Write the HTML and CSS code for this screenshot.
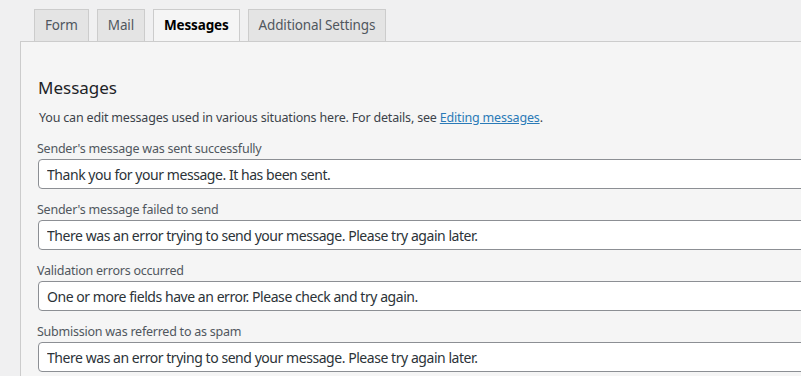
FILE: index.html
```html
<!DOCTYPE html>
<html lang="en">
<head>
    <meta charset="UTF-8">
    <meta name="viewport" content="width=device-width, initial-scale=1.0">
    <title>Contact Form Messages</title>
    <link rel="stylesheet" href="styles.css">
</head>
<body>
    <div class="editor">
        <!-- Tabs -->
        <ul class="tabs">
            <li class="tab"><a href="#">Form</a></li>
            <li class="tab"><a href="#">Mail</a></li>
            <li class="tab active"><a href="#">Messages</a></li>
            <li class="tab"><a href="#">Additional Settings</a></li>
        </ul>

        <!-- Messages panel -->
        <div class="panel">
            <h2>Messages</h2>
            <p class="intro">You can edit messages used in various situations here. For details, see <a href="#">Editing messages</a>.</p>

            <div class="field">
                <label for="msg1">Sender's message was sent successfully</label>
                <input type="text" id="msg1" value="Thank you for your message. It has been sent.">
            </div>
            <div class="field">
                <label for="msg2">Sender's message failed to send</label>
                <input type="text" id="msg2" value="There was an error trying to send your message. Please try again later.">
            </div>
            <div class="field">
                <label for="msg3">Validation errors occurred</label>
                <input type="text" id="msg3" value="One or more fields have an error. Please check and try again.">
            </div>
            <div class="field">
                <label for="msg4">Submission was referred to as spam</label>
                <input type="text" id="msg4" value="There was an error trying to send your message. Please try again later.">
            </div>
        </div>
    </div>
</body>
</html>
```

FILE: styles.css
```css
body {
    font-family: "Noto Sans", "Open Sans", sans-serif;
    margin: 0;
    padding: 0;
    background-color: #f0f0f1;
    color: #3c434a;
    overflow: hidden;
}
.editor {
    display: flex;
    flex-direction: column;
    height: 376px;
    box-sizing: border-box;
    padding: 9px 0 0 20px;
}
/* Tab strip */
.tabs {
    list-style: none;
    display: flex;
    gap: 8px;
    margin: 0;
    padding: 0 0 0 14px;
}
.tab {
    background-color: #e4e4e4;
    border: 1px solid #ccc;
    border-bottom: none;
    height: 31px;
}
.tab a {
    display: block;
    padding: 0 10px;
    line-height: 31px;
    font-size: 13.5px;
    letter-spacing: -0.15px;
    color: #50575e;
    text-decoration: none;
}
.tab.active {
    background-color: #f5f5f5;
    position: relative;
    top: 1px;
    margin-top: -1px;
}
.tab.active a {
    color: #000;
    font-weight: bold;
}
/* Panel */
.panel {
    flex: 1;
    min-height: 0;
    overflow: hidden;
    background-color: #f5f5f5;
    border-top: 1px solid #ccc;
    border-left: 1px solid #ccc;
    padding: 0 0 0 17px;
}
.panel h2 {
    font-size: 17px;
    font-weight: normal;
    color: #1d2327;
    margin: 34px 0 8px 0;
    line-height: 24px;
}
.intro {
    font-size: 12.5px;
    letter-spacing: -0.18px;
    margin: 0 0 9px 1px;
    line-height: 20px;
}
.intro a {
    color: #2a7ab7;
}
.field {
    margin-bottom: 9px;
}
.field:last-child {
    margin-bottom: 0;
}
.field label {
    display: block;
    margin-left: -1px;
    padding-top: 2px;
    font-size: 12.5px;
    letter-spacing: -0.24px;
    color: #50575e;
    line-height: 20px;
}
.field input {
    display: block;
    box-sizing: border-box;
    width: 800px;
    height: 30px;
    margin: 0;
    padding: 0 8px;
    font-family: inherit;
    font-size: 14px;
    letter-spacing: -0.45px;
    color: #2c3338;
    background-color: #fff;
    border: 1px solid #8c8f94;
    border-radius: 4px;
}
```
